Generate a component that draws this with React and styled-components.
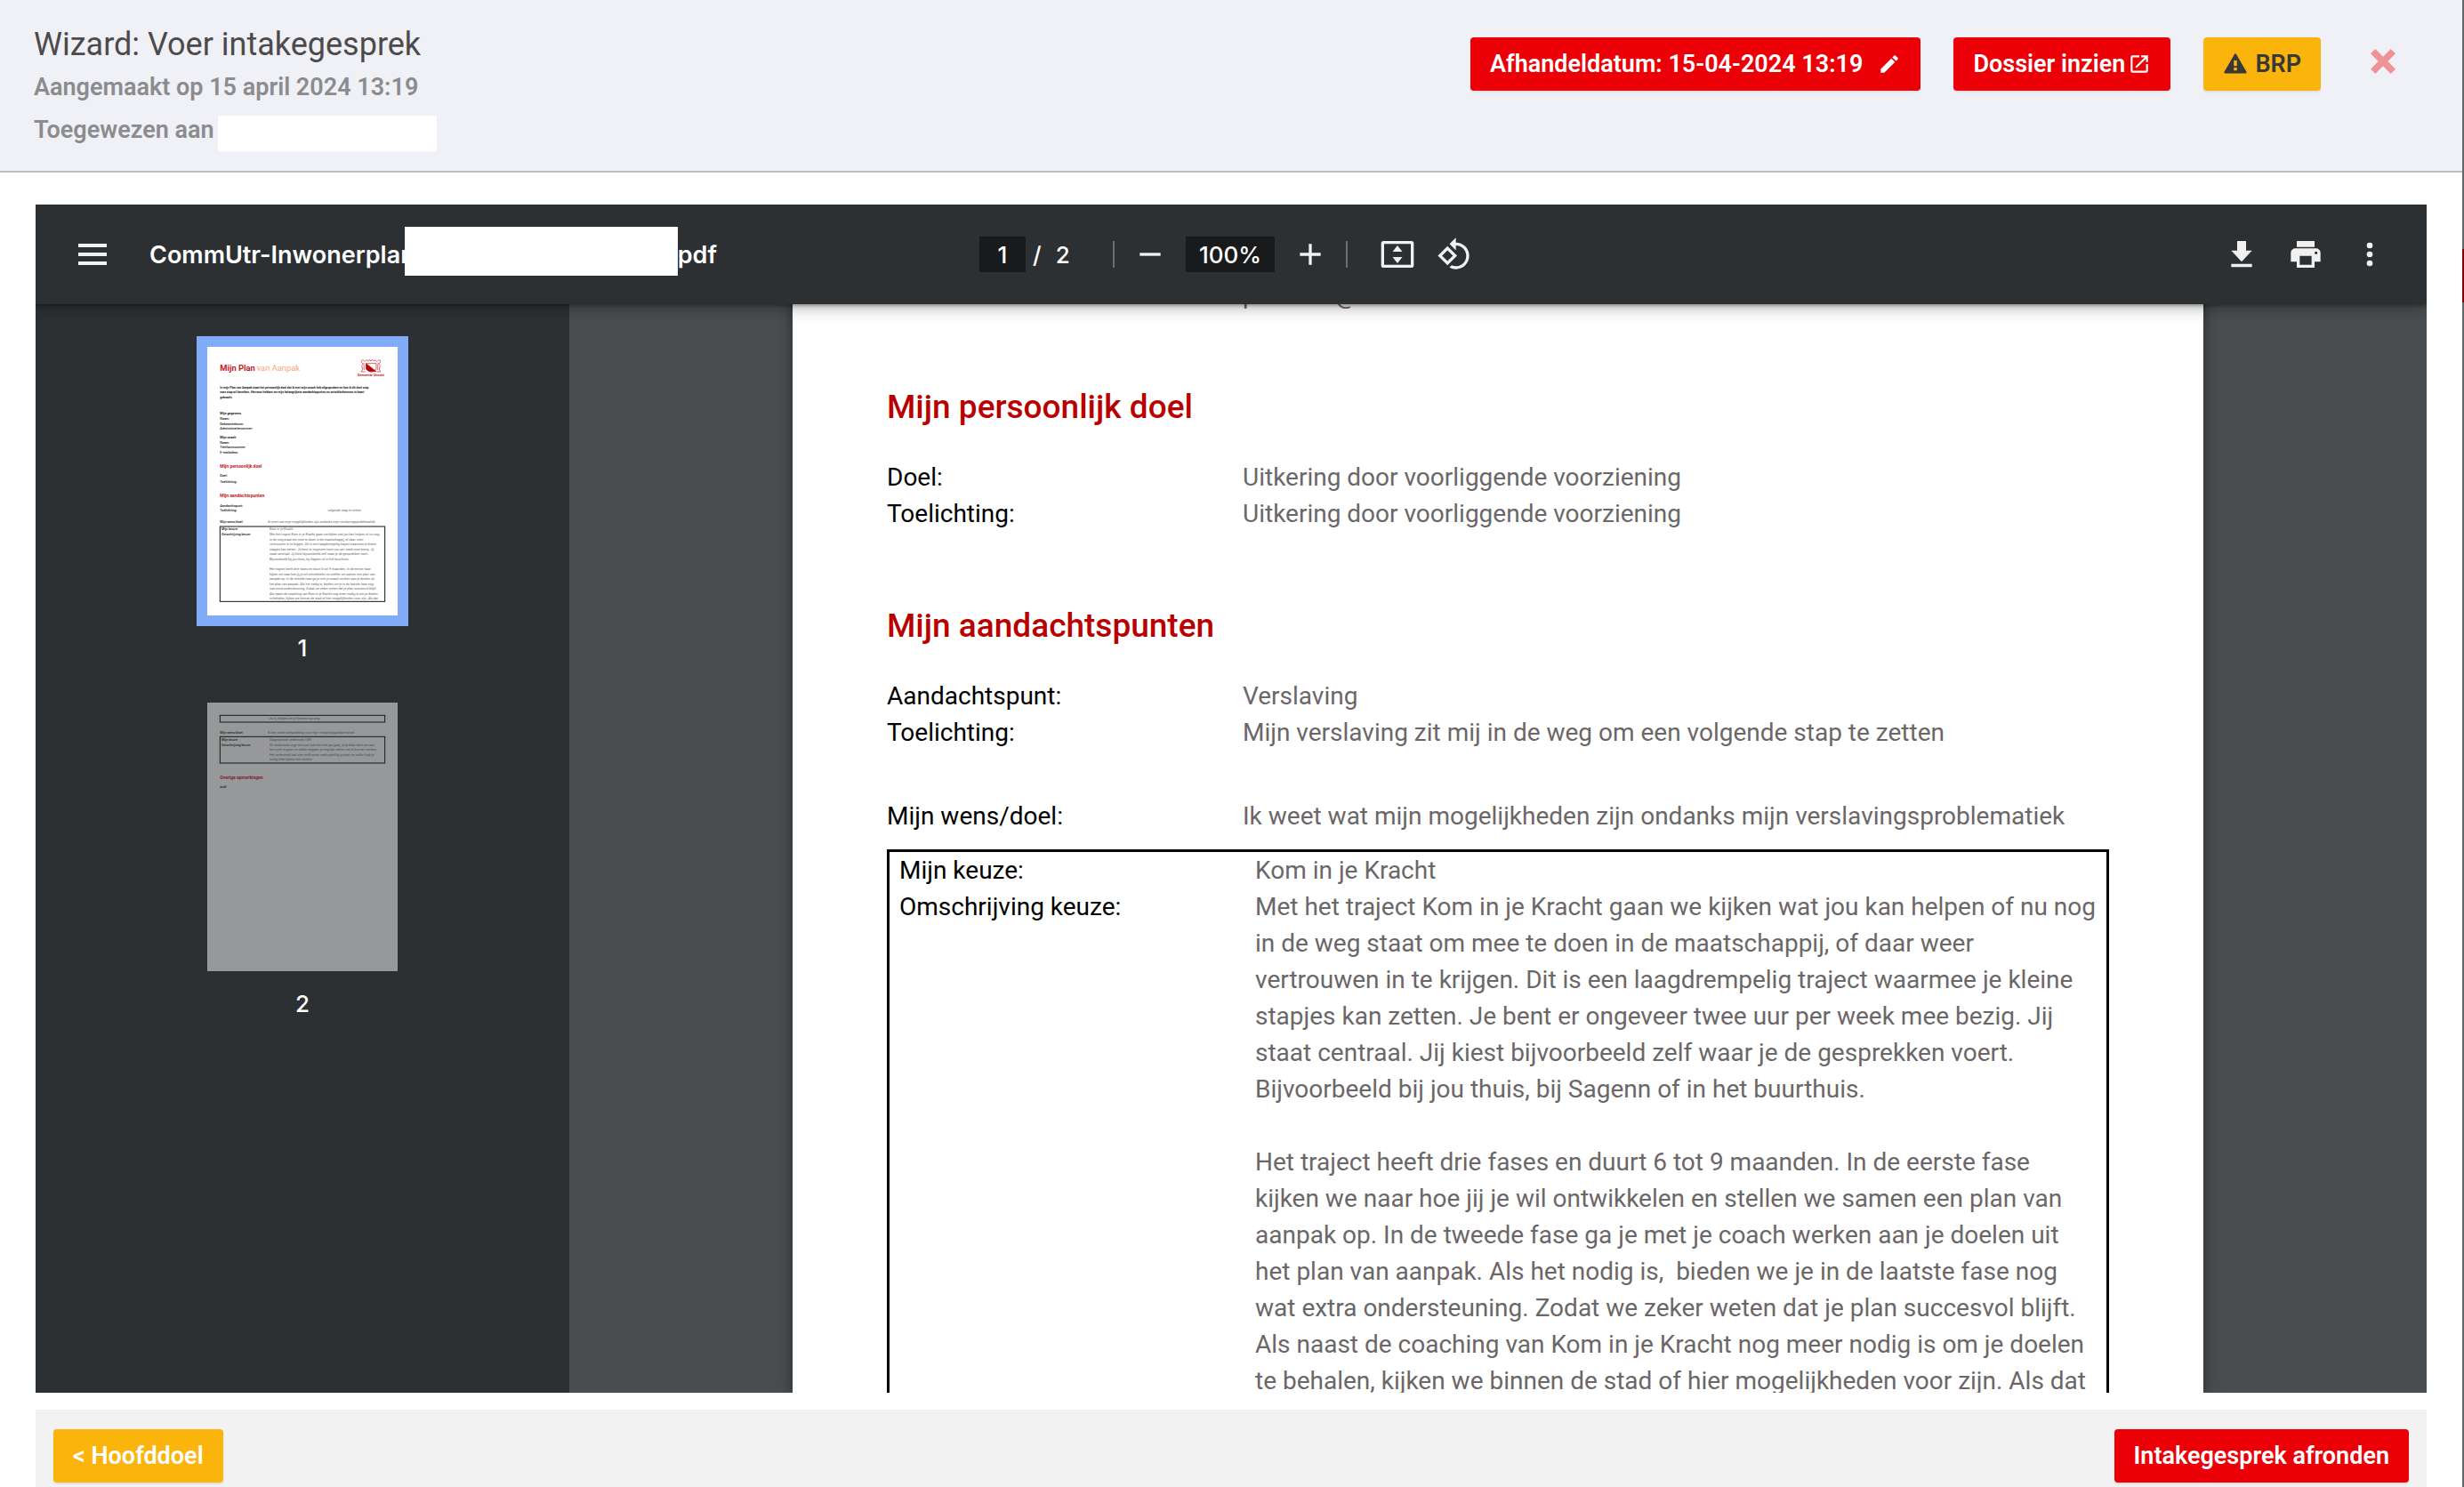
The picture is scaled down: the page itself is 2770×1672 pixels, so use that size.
import React from "react";
import styled, { createGlobalStyle } from "styled-components";

const GlobalStyle = createGlobalStyle`
  *, *::before, *::after { box-sizing: border-box; }
  body { margin: 0; background: #fff; font-family: Roboto, "Liberation Sans", sans-serif; }
  button, input { font: inherit; margin: 0; }
  h1, h2, p, dl, dt, dd, figure { margin: 0; font-weight: inherit; }
`;

/* ---------- shell ---------- */

const Shell = styled.div`
  display: grid;
  grid-template-columns: minmax(0, 1fr) 2px;
  height: 100vh;
`;

const Screen = styled.div`
  display: flex;
  flex-direction: column;
  min-height: 0;
`;

const WindowEdge = styled.div`
  background: linear-gradient(#636768 0 280px, #7d0006 280px 340px, #636768 340px);
`;

/* ---------- header ---------- */

const Header = styled.header`
  display: flex;
  justify-content: space-between;
  align-items: flex-start;
  padding: 26px 75px 22px 38px;
  background: #f0f1f6;
  border-bottom: 2px solid #bcbbc3;
`;

const Title = styled.h1`
  font-size: 36px;
  line-height: 48px;
  color: #4c4a4b;
`;

const Meta = styled.p`
  display: flex;
  align-items: flex-end;
  gap: 4px;
  font-size: 27px;
  font-weight: 600;
  line-height: 48px;
  color: #8c8c8e;
`;

const HiddenName = styled.span`
  width: 246px;
  height: 40px;
  background: #fff;
`;

const Actions = styled.div`
  display: flex;
  align-items: flex-start;
  gap: 37px;
  padding-top: 16px;
`;

const tones = {
  red: { back: "#ea0006", ink: "#fff" },
  amber: { back: "#fbb40b", ink: "#fff" },
  warning: { back: "#fbb40b", ink: "#383838" },
};

const Button = styled.button`
  display: flex;
  align-items: center;
  gap: ${(p) => p.$gap || 0}px;
  height: 60px;
  padding: 0 22px;
  border: 0;
  border-radius: 4px;
  background: ${(p) => tones[p.$tone].back};
  color: ${(p) => tones[p.$tone].ink};
  box-shadow: 0 2px 2px rgba(0, 0, 0, 0.07);
  font-size: 27px;
  font-weight: 600;
  white-space: nowrap;
  cursor: pointer;
`;

const CloseButton = styled.button`
  display: flex;
  align-items: center;
  height: 54px;
  margin-left: 19px;
  padding: 0;
  border: 0;
  background: none;
  color: #f09398;
`;

const Glyph = styled.svg`
  display: block;
  flex: none;
  width: ${(p) => p.$size}px;
  height: ${(p) => p.$size}px;
  fill: currentColor;
`;

const paths = {
  edit: "M3 17.25V21h3.75L17.81 9.94l-3.75-3.75L3 17.25zM20.71 7.04a1 1 0 0 0 0-1.41l-2.34-2.34a1 1 0 0 0-1.41 0l-1.83 1.83 3.75 3.75 1.83-1.83z",
  open: "M19 19H5V5h7V3H5a2 2 0 0 0-2 2v14a2 2 0 0 0 2 2h14c1.1 0 2-.9 2-2v-7h-2v7zM14 3v2h3.59l-9.83 9.83 1.41 1.41L19 6.41V10h2V3h-7z",
  warning: "M2.2 21h19.6a1 1 0 0 0 .9-1.5L12.9 2.5a1 1 0 0 0-1.8 0L1.3 19.5a1 1 0 0 0 .9 1.5zM13.5 18.3h-3v-2.8h3v2.8zm0-4.3h-3V8.5h3V14z",
  close: "M4.6 0L12 7.4 19.4 0 24 4.6 16.6 12 24 19.4 19.4 24 12 16.6 4.6 24 0 19.4 7.4 12 0 4.6z",
  menu: "M2.4 4.8h19.2v2.4H2.4zM2.4 10.8h19.2v2.4H2.4zM2.4 16.8h19.2v2.4H2.4z",
  minus: "M19 13H5v-2h14v2z",
  plus: "M19 13h-6v6h-2v-6H5v-2h6V5h2v6h6v2z",
  fit: "M2.5 3h19A1.5 1.5 0 0 1 23 4.5v15a1.5 1.5 0 0 1-1.5 1.5h-19A1.5 1.5 0 0 1 1 19.5v-15A1.5 1.5 0 0 1 2.5 3zM3 5v14h18V5zM12 6l3.3 4.2H8.7zM12 18l3.3-4.2H8.7z",
  rotate: "M7.34 6.41L.86 12.9l6.49 6.48 6.49-6.48-6.5-6.49zM3.69 12.9l3.66-3.66L11 12.9l-3.66 3.66-3.65-3.66zm15.67-6.26C17.61 4.88 15.3 4 13 4V.76L8.76 5 13 9.24V6c1.79 0 3.58.68 4.95 2.05 2.73 2.73 2.73 7.17 0 9.9C16.58 19.32 14.79 20 13 20c-.97 0-1.94-.21-2.84-.61l-1.49 1.49C10.02 21.62 11.51 22 13 22c2.3 0 4.61-.88 6.36-2.64 3.52-3.51 3.52-9.21 0-12.72z",
  download: "M19 9.5h-4V3H9v6.5H5l7 7.5 7-7.5zM5 18.5v2h14v-2H5z",
  print: "M19 8H5a3 3 0 0 0-3 3v6h4v4h12v-4h4v-6a3 3 0 0 0-3-3zm-3 11H8v-6h8v6zm3-7a1 1 0 1 1 0-2 1 1 0 0 1 0 2zm-1-9H6v4h12V3z",
  more: "M12 8a2 2 0 1 0 0-4 2 2 0 0 0 0 4zm0 2a2 2 0 1 0 0 4 2 2 0 0 0 0-4zm0 6a2 2 0 1 0 0 4 2 2 0 0 0 0-4z",
};

function Icon({ name, size = 40 }) {
  return (
    <Glyph $size={size} viewBox="0 0 24 24" aria-hidden="true">
      <path fillRule="evenodd" d={paths[name]} />
    </Glyph>
  );
}

/* ---------- viewer ---------- */

const Viewer = styled.main`
  display: flex;
  flex-direction: column;
  flex: 1;
  min-height: 0;
  margin: 36px 40px 19px;
  background: #4a4d4f;
  overflow: hidden;
`;

const Toolbar = styled.div`
  position: relative;
  z-index: 1;
  display: grid;
  grid-template-columns: minmax(0, 1fr) auto minmax(0, 1fr);
  align-items: center;
  flex: none;
  height: 112px;
  padding: 0 32px;
  background: #2c3033;
  color: #f1f1f1;
  font-family: Inter, "Liberation Sans", sans-serif;
  font-size: 26px;
  font-weight: 500;
  box-shadow: 0 1px 4px rgba(0, 0, 0, 0.4), 0 4px 16px rgba(0, 0, 0, 0.3);
`;

const ToolGroup = styled.div`
  display: flex;
  align-items: center;
  justify-content: ${(p) => (p.$end ? "flex-end" : "flex-start")};
  gap: ${(p) => p.$gap}px;
`;

const ToolButton = styled.button`
  display: flex;
  align-items: center;
  justify-content: center;
  flex: none;
  width: 64px;
  height: 64px;
  padding: 0;
  border: 0;
  background: none;
  color: inherit;
`;

const FileName = styled.div`
  display: flex;
  align-items: center;
  font-size: 27px;
  font-weight: 600;
  color: #fff;
  white-space: nowrap;
`;

const NameMask = styled.span`
  width: 307px;
  height: 55px;
  margin: 0 0 7px -12px;
  background: #fff;
`;

const Field = styled.input`
  width: ${(p) => p.$width}px;
  height: 40px;
  padding: 0;
  border: 0;
  background: #191a1c;
  color: #fff;
  text-align: center;
`;

const PageTotal = styled.span`
  display: flex;
  gap: 16px;
  width: 82px;
  color: #fff;
`;

const Divider = styled.span`
  width: 2px;
  height: 30px;
  margin-right: ${(p) => p.$after || 0}px;
  background: #6b6e70;
`;

const Body = styled.div`
  display: grid;
  grid-template-columns: 600px minmax(0, 1fr);
  flex: 1;
  min-height: 0;
`;

const Sidebar = styled.nav`
  display: flex;
  flex-direction: column;
  align-items: center;
  gap: 32px;
  padding-top: 36px;
  background: #2c3033;
`;

const Thumb = styled.figure`
  display: flex;
  flex-direction: column;
  align-items: center;
  gap: 8px;
`;

const ThumbFrame = styled.button`
  padding: 12px;
  border: 0;
  background: ${(p) => (p.$active ? "#80abf8" : "transparent")};
`;

const ThumbSheet = styled.svg`
  display: block;
  width: 214px;
  height: 302px;
  background: #fff;
  opacity: ${(p) => (p.$active ? 1 : 0.5)};
  font-family: Roboto, sans-serif;
`;

const ThumbLabel = styled.figcaption`
  font-family: Inter, sans-serif;
  font-size: 26px;
  font-weight: 500;
  line-height: 34px;
  color: #fff;
`;

const Canvas = styled.div`
  display: flex;
  justify-content: center;
  overflow: hidden;
`;

/* The sheet is scrolled: its first visible line is cut by the toolbar. */
const Sheet = styled.article`
  flex: none;
  width: 1586px;
  margin-top: -31px;
  padding: 0 106px;
  background: #fff;
  box-shadow: 0 0 14px rgba(0, 0, 0, 0.5);
  font-size: 28px;
  line-height: 41px;
`;

const Section = styled.section`
  margin-top: 81px;
`;

const SectionTitle = styled.h2`
  margin-bottom: 33px;
  font-size: 37px;
  font-weight: 500;
  line-height: 50px;
  color: #b80000;
`;

const Facts = styled.dl`
  display: grid;
  grid-template-columns: 400px minmax(0, 1fr);
  margin-top: ${(p) => p.$top || 0}px;
`;

const Term = styled.dt`
  color: #000;
`;

const Value = styled.dd`
  color: #6b6768;
  white-space: pre;
`;

const MailTail = styled.span`
  margin-left: 88px;
`;

const Choice = styled.div`
  height: 900px;
  margin-top: 17px;
  padding: 0 11px;
  border: 3px solid #000;
`;

/* ---------- footer ---------- */

const Footer = styled.footer`
  display: flex;
  justify-content: space-between;
  align-items: flex-start;
  flex: none;
  height: 87px;
  margin: 0 40px;
  padding: 22px 20px 0;
  background: #f2f2f2;
`;

/* ---------- content ---------- */

const description = `Met het traject Kom in je Kracht gaan we kijken wat jou kan helpen of nu nog
in de weg staat om mee te doen in de maatschappij, of daar weer
vertrouwen in te krijgen. Dit is een laagdrempelig traject waarmee je kleine
stapjes kan zetten. Je bent er ongeveer twee uur per week mee bezig. Jij
staat centraal. Jij kiest bijvoorbeeld zelf waar je de gesprekken voert.
Bijvoorbeeld bij jou thuis, bij Sagenn of in het buurthuis.

Het traject heeft drie fases en duurt 6 tot 9 maanden. In de eerste fase
kijken we naar hoe jij je wil ontwikkelen en stellen we samen een plan van
aanpak op. In de tweede fase ga je met je coach werken aan je doelen uit
het plan van aanpak. Als het nodig is,  bieden we je in de laatste fase nog
wat extra ondersteuning. Zodat we zeker weten dat je plan succesvol blijft.
Als naast de coaching van Kom in je Kracht nog meer nodig is om je doelen
te behalen, kijken we binnen de stad of hier mogelijkheden voor zijn. Als dat`;

const inkOf = { label: "#111", value: "#666", head: "#c4161c" };

/* x, baseline, text, kind, weight, size */
const firstPage = [
  [43, 140, "In mijn Plan van Aanpak staat het persoonlijk doel dat ik met mijn coach heb afgesproken en hoe ik dit doel stap", "label", 700, 10],
  [43, 156, "voor stap wil bereiken. Hiervoor hebben we mijn belangrijkste aandachtspunten en ontwikkelwensen in kaart", "label", 700, 10],
  [43, 173, "gebracht.", "label", 700, 10],
  [43, 227, "Mijn gegevens", "label", 700],
  [43, 245, "Naam:", "label"],
  [43, 263, "Geboortedatum:", "label"],
  [43, 278, "Administratienummer:", "label"],
  [43, 308, "Mijn coach", "label", 700],
  [43, 326, "Naam:", "label"],
  [43, 341, "Telefoonnummer:", "label"],
  [43, 359, "E-mailadres:", "label"],
  [43, 409, "Mijn persoonlijk doel", "head", 700, 15],
  [43, 439, "Doel:", "label"],
  [43, 458, "Toelichting:", "label"],
  [43, 508, "Mijn aandachtspunten", "head", 700, 15],
  [43, 541, "Aandachtspunt:", "label"],
  [43, 556, "Toelichting:", "label"],
  [406, 556, "volgende stap te zetten", "value"],
  [43, 595, "Mijn wens/doel:", "label"],
  [204, 595, "Ik weet wat mijn mogelijkheden zijn ondanks mijn verslavingsproblematiek", "value"],
  [48, 619, "Mijn keuze:", "label"],
  [48, 637, "Omschrijving keuze:", "label"],
  [210, 619, "Kom in je Kracht", "value"],
  ...description.split("\n").map((line, i) => [210, 637 + Math.round(i * 16.6), line, "value"]),
];

const secondPage = [
  [210, 57, "zo is, helpen we je hiermee op weg.", "value"],
  [43, 105, "Mijn wens/doel:", "label"],
  [204, 105, "Ik ben onder behandeling voor mijn verslavingsproblematiek", "value"],
  [48, 129, "Mijn keuze:", "label"],
  [210, 129, "Diagnostisch onderzoek UWI", "value"],
  [48, 147, "Omschrijving keuze:", "label"],
  [210, 147, "Dit onderzoek zegt iets over hoe het met jou gaat, of je klaar bent om aan", "value"],
  [210, 162, "het werk te gaan en welke stappen je nog kan zetten om te kunnen werken.", "value"],
  [210, 180, "Het onderzoek laat zien welk soort werk goed bij je past, en welke hulp je", "value"],
  [210, 195, "nodig hebt tijdens het werken.", "value"],
  [43, 257, "Overige opmerkingen", "head", 700, 15],
  [43, 287, "asdf", "label"],
];

function ThumbText({ lines }) {
  return lines.map(([x, y, text, kind, weight = kind === "label" ? 500 : 400, size = 11], i) => (
    <text key={i} x={x} y={y} fontSize={size} fontWeight={weight} fill={inkOf[kind]}>
      {text}
    </text>
  ));
}

function CityCrest() {
  return (
    <g fill="none" stroke="#c4161c" strokeWidth="2">
      <path d="M536 56h34v20l-17 9-17-9z" fill="#fff" />
      <path d="M536 56l34 27h-24l-10-8z" fill="#b80000" />
      <path d="M532 50l5-6 5 4 4-5 6 5 6-5 4 5 5-4 5 6" />
      <path d="M530 48c-8-8-14 0-8 6s-4 8 0 14 0 10-2 16h12M574 48c8-8 14 0 8 6s4 8 0 14 0 10 2 16h-12" />
      <path d="M527 54c4 8 0 14 2 24M577 54c-4 8 0 14-2 24" />
    </g>
  );
}

export default function App() {
  return (
    <>
      <GlobalStyle />
      <Shell>
        <Screen>
          <Header>
            <div>
              <Title>Wizard: Voer intakegesprek</Title>
              <Meta>Aangemaakt op 15 april 2024 13:19</Meta>
              <Meta>
                Toegewezen aan <HiddenName />
              </Meta>
            </div>
            <Actions>
              <Button $tone="red" $gap={17}>
                Afhandeldatum: 15-04-2024 13:19
                <Icon name="edit" size={26} />
              </Button>
              <Button $tone="red" $gap={3}>
                Dossier inzien
                <Icon name="open" size={26} />
              </Button>
              <Button $tone="warning" $gap={8}>
                <Icon name="warning" size={28} />
                BRP
              </Button>
              <CloseButton aria-label="Sluiten">
                <Icon name="close" size={28} />
              </CloseButton>
            </Actions>
          </Header>

          <Viewer>
            <Toolbar>
              <ToolGroup $gap={32}>
                <ToolButton aria-label="Menu">
                  <Icon name="menu" />
                </ToolButton>
                <FileName>
                  CommUtr-Inwonerplan
                  <NameMask />
                  pdf
                </FileName>
              </ToolGroup>
              <ToolGroup $gap={8}>
                <Field $width={52} defaultValue="1" aria-label="Pagina" />
                <PageTotal>
                  <span>/</span>
                  <span>2</span>
                </PageTotal>
                <Divider />
                <ToolButton aria-label="Uitzoomen">
                  <Icon name="minus" />
                </ToolButton>
                <Field $width={100} defaultValue="100%" aria-label="Zoom" />
                <ToolButton aria-label="Inzoomen">
                  <Icon name="plus" />
                </ToolButton>
                <Divider $after={16} />
                <ToolGroup $gap={0}>
                  <ToolButton aria-label="Passend maken">
                    <Icon name="fit" />
                  </ToolButton>
                  <ToolButton aria-label="Linksom draaien">
                    <Icon name="rotate" />
                  </ToolButton>
                </ToolGroup>
              </ToolGroup>
              <ToolGroup $gap={8} $end>
                <ToolButton aria-label="Downloaden">
                  <Icon name="download" />
                </ToolButton>
                <ToolButton aria-label="Afdrukken">
                  <Icon name="print" />
                </ToolButton>
                <ToolButton aria-label="Meer">
                  <Icon name="more" />
                </ToolButton>
              </ToolGroup>
            </Toolbar>

            <Body>
              <Sidebar>
                <Thumb>
                  <ThumbFrame $active aria-label="Pagina 1">
                    <ThumbSheet $active viewBox="0 0 642 906">
                      <text x="43" y="80" fontSize="28" fontWeight="700" fill="#c4161c">Mijn Plan</text>
                      <text x="167" y="80" fontSize="28" fill="#f5a878">van Aanpak</text>
                      <CityCrest />
                      <text x="507" y="99" fontSize="11" fontWeight="700" fill="#c4161c">Gemeente Utrecht</text>
                      <ThumbText lines={firstPage} />
                      <rect x="43" y="606" width="556" height="253" fill="none" stroke="#111" strokeWidth="3" />
                    </ThumbSheet>
                  </ThumbFrame>
                  <ThumbLabel>1</ThumbLabel>
                </Thumb>
                <Thumb>
                  <ThumbFrame aria-label="Pagina 2">
                    <ThumbSheet viewBox="0 0 642 906">
                      <ThumbText lines={secondPage} />
                      <rect x="43" y="43" width="556" height="23" fill="none" stroke="#000" strokeWidth="3" />
                      <rect x="43" y="115" width="556" height="89" fill="none" stroke="#000" strokeWidth="3" />
                    </ThumbSheet>
                  </ThumbFrame>
                  <ThumbLabel>2</ThumbLabel>
                </Thumb>
              </Sidebar>

              <Canvas>
                <Sheet>
                  <Facts>
                    <Term />
                    <Value>
                      p<MailTail>@</MailTail>
                    </Value>
                  </Facts>
                  <Section>
                    <SectionTitle>Mijn persoonlijk doel</SectionTitle>
                    <Facts>
                      <Term>Doel:</Term>
                      <Value>Uitkering door voorliggende voorziening</Value>
                      <Term>Toelichting:</Term>
                      <Value>Uitkering door voorliggende voorziening</Value>
                    </Facts>
                  </Section>
                  <Section>
                    <SectionTitle>Mijn aandachtspunten</SectionTitle>
                    <Facts>
                      <Term>Aandachtspunt:</Term>
                      <Value>Verslaving</Value>
                      <Term>Toelichting:</Term>
                      <Value>Mijn verslaving zit mij in de weg om een volgende stap te zetten</Value>
                    </Facts>
                    <Facts $top={53}>
                      <Term>Mijn wens/doel:</Term>
                      <Value>Ik weet wat mijn mogelijkheden zijn ondanks mijn verslavingsproblematiek</Value>
                    </Facts>
                    <Choice>
                      <Facts>
                        <Term>Mijn keuze:</Term>
                        <Value>Kom in je Kracht</Value>
                        <Term>Omschrijving keuze:</Term>
                        <Value>{description}</Value>
                      </Facts>
                    </Choice>
                  </Section>
                </Sheet>
              </Canvas>
            </Body>
          </Viewer>

          <Footer>
            <Button $tone="amber">&lt; Hoofddoel</Button>
            <Button $tone="red">Intakegesprek afronden</Button>
          </Footer>
        </Screen>
        <WindowEdge />
      </Shell>
    </>
  );
}
